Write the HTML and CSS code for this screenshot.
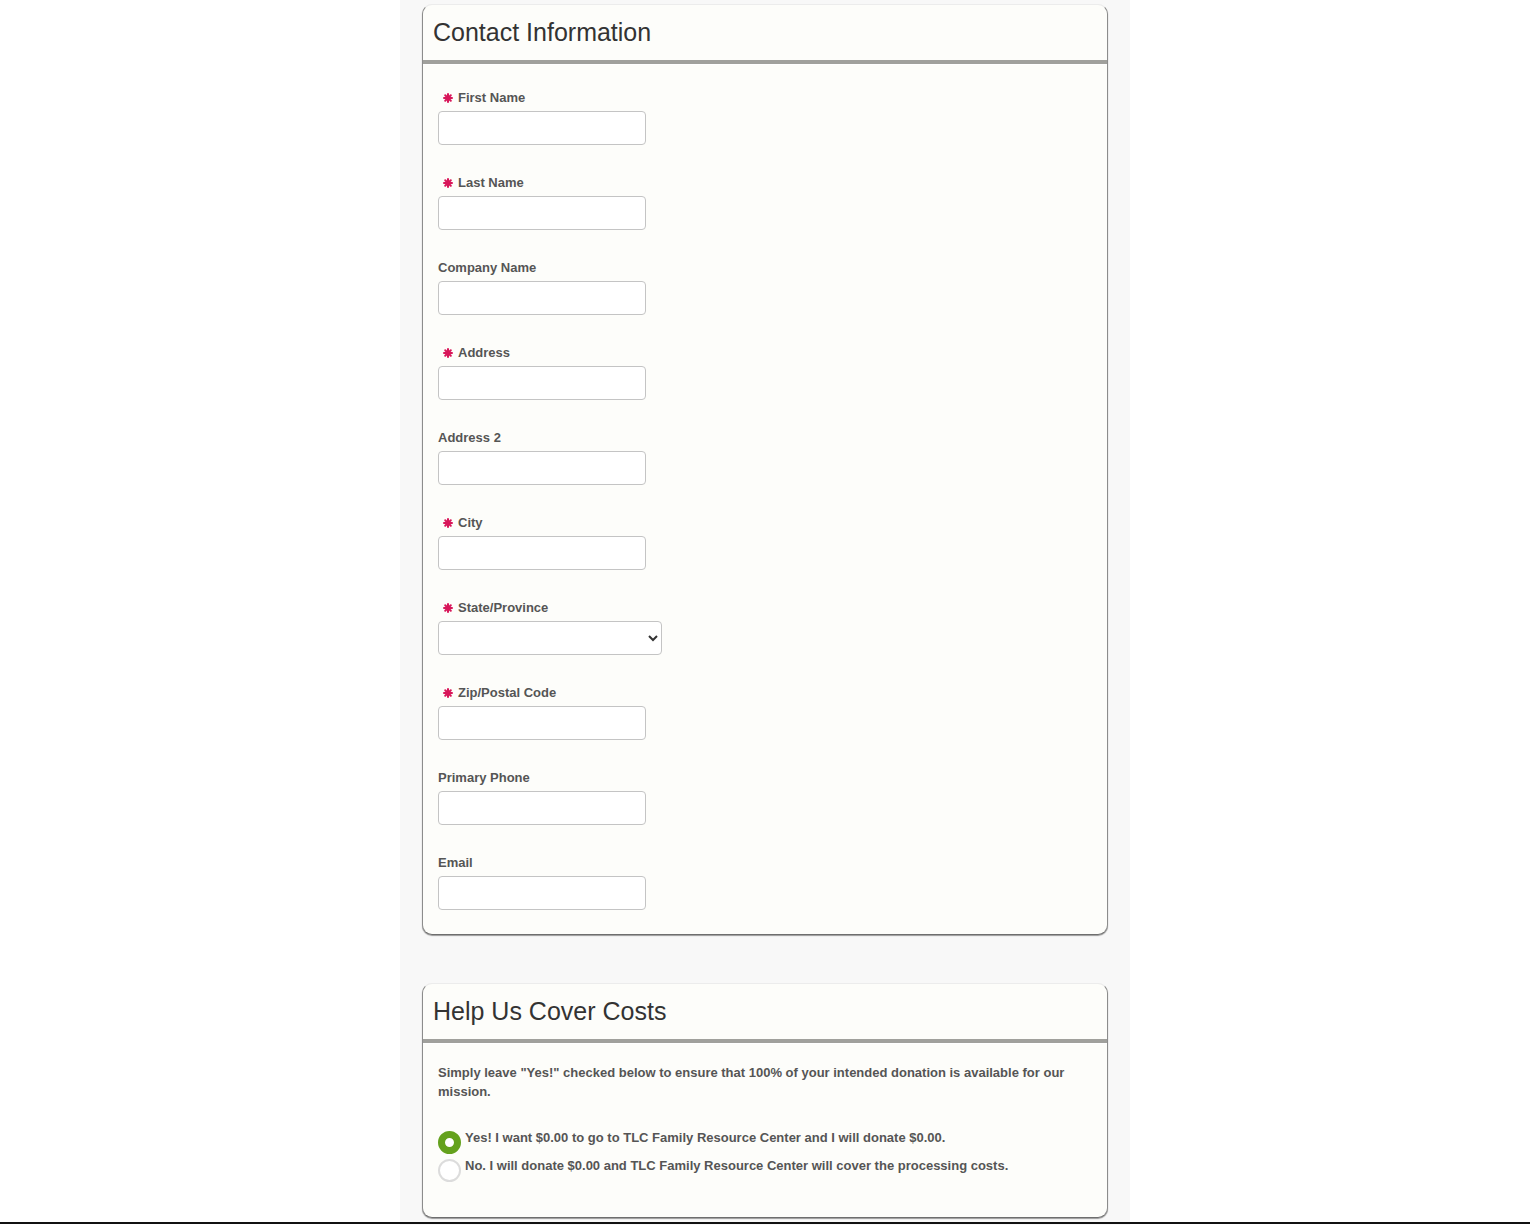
FILE: index.html
```html
<!DOCTYPE html>
<html lang="en">
<head>
<meta charset="utf-8">
<title>Contact Information</title>
<link rel="stylesheet" href="styles.css">
</head>
<body>
<div class="column">
  <section class="card">
    <h2 class="card-title">Contact Information</h2>
    <div class="card-body">
      <div class="field">
        <label class="label"><svg class="req" viewBox="0 0 10 10"><g stroke="#d8175a" stroke-width="2" stroke-linecap="round"><line x1="5" y1="1" x2="5" y2="9"/><line x1="1" y1="5" x2="9" y2="5"/><line x1="2.2" y1="2.2" x2="7.8" y2="7.8"/><line x1="7.8" y1="2.2" x2="2.2" y2="7.8"/></g></svg>First Name</label>
        <input class="input" type="text">
      </div>
      <div class="field">
        <label class="label"><svg class="req" viewBox="0 0 10 10"><g stroke="#d8175a" stroke-width="2" stroke-linecap="round"><line x1="5" y1="1" x2="5" y2="9"/><line x1="1" y1="5" x2="9" y2="5"/><line x1="2.2" y1="2.2" x2="7.8" y2="7.8"/><line x1="7.8" y1="2.2" x2="2.2" y2="7.8"/></g></svg>Last Name</label>
        <input class="input" type="text">
      </div>
      <div class="field">
        <label class="label">Company Name</label>
        <input class="input" type="text">
      </div>
      <div class="field">
        <label class="label"><svg class="req" viewBox="0 0 10 10"><g stroke="#d8175a" stroke-width="2" stroke-linecap="round"><line x1="5" y1="1" x2="5" y2="9"/><line x1="1" y1="5" x2="9" y2="5"/><line x1="2.2" y1="2.2" x2="7.8" y2="7.8"/><line x1="7.8" y1="2.2" x2="2.2" y2="7.8"/></g></svg>Address</label>
        <input class="input" type="text">
      </div>
      <div class="field">
        <label class="label">Address 2</label>
        <input class="input" type="text">
      </div>
      <div class="field">
        <label class="label"><svg class="req" viewBox="0 0 10 10"><g stroke="#d8175a" stroke-width="2" stroke-linecap="round"><line x1="5" y1="1" x2="5" y2="9"/><line x1="1" y1="5" x2="9" y2="5"/><line x1="2.2" y1="2.2" x2="7.8" y2="7.8"/><line x1="7.8" y1="2.2" x2="2.2" y2="7.8"/></g></svg>City</label>
        <input class="input" type="text">
      </div>
      <div class="field">
        <label class="label"><svg class="req" viewBox="0 0 10 10"><g stroke="#d8175a" stroke-width="2" stroke-linecap="round"><line x1="5" y1="1" x2="5" y2="9"/><line x1="1" y1="5" x2="9" y2="5"/><line x1="2.2" y1="2.2" x2="7.8" y2="7.8"/><line x1="7.8" y1="2.2" x2="2.2" y2="7.8"/></g></svg>State/Province</label>
        <select class="select"><option></option></select>
      </div>
      <div class="field">
        <label class="label"><svg class="req" viewBox="0 0 10 10"><g stroke="#d8175a" stroke-width="2" stroke-linecap="round"><line x1="5" y1="1" x2="5" y2="9"/><line x1="1" y1="5" x2="9" y2="5"/><line x1="2.2" y1="2.2" x2="7.8" y2="7.8"/><line x1="7.8" y1="2.2" x2="2.2" y2="7.8"/></g></svg>Zip/Postal Code</label>
        <input class="input" type="text">
      </div>
      <div class="field">
        <label class="label">Primary Phone</label>
        <input class="input" type="text">
      </div>
      <div class="field">
        <label class="label">Email</label>
        <input class="input" type="text">
      </div>
    </div>
  </section>

  <section class="card">
    <h2 class="card-title">Help Us Cover Costs</h2>
    <div class="card-body costs">
      <p class="note">Simply leave "Yes!" checked below to ensure that 100% of your intended donation is available for our mission.</p>
      <div class="options">
        <div class="option"><span class="radio checked"></span><span class="option-text">Yes! I want $0.00 to go to TLC Family Resource Center and I will donate $0.00.</span></div>
        <div class="option"><span class="radio"></span><span class="option-text">No. I will donate $0.00 and TLC Family Resource Center will cover the processing costs.</span></div>
      </div>
    </div>
  </section>
</div>
<div class="bottom-line"></div>
</body>
</html>
```

FILE: styles.css
```css
html, body {
  margin: 0;
  padding: 0;
  background: #ffffff;
  font-family: "Liberation Sans", Arial, sans-serif;
}

.column {
  width: 730px;
  margin: 0 auto;
  background: #f8f8f8;
  padding: 4px 22px 40px 22px;
  box-sizing: border-box;
  display: flex;
  flex-direction: column;
  gap: 48px;
  min-height: 1225px;
}

.card {
  background: #fdfdfa;
  border-radius: 10px;
  border: 1px solid #8c8c8c;
  border-top-color: #ececec;
  border-bottom-color: #6e6e6e;
  box-shadow: 0 1px 1px #9a9a9a;
}

.card-title {
  margin: 0;
  height: 42px;
  padding: 13px 10px 0;
  font-size: 25px;
  font-weight: normal;
  line-height: 29px;
  color: #333333;
  border-bottom: 4px solid #a0a09c;
}

.card-body {
  padding: 24px 15px 24px;
  border-top: 1px solid #ffffff;
}

.field {
  margin-bottom: 29px;
}

.field:last-child {
  margin-bottom: 0;
}

.label {
  display: flex;
  align-items: center;
  height: 16px;
  margin-bottom: 6px;
  font-size: 13px;
  font-weight: bold;
  color: #555555;
}

.req {
  width: 10px;
  height: 10px;
  margin: 1px 5px 0 5px;
}

.input {
  display: block;
  width: 208px;
  height: 34px;
  box-sizing: border-box;
  border: 1px solid #c4c4c4;
  border-radius: 4px;
  background: #ffffff;
  margin: 0;
  padding: 4px 8px;
  font-family: inherit;
  font-size: 13px;
}

.select {
  display: block;
  width: 224px;
  height: 34px;
  box-sizing: border-box;
  border: 1px solid #c4c4c4;
  border-radius: 4px;
  background: #ffffff;
  margin: 0;
  font-family: inherit;
  font-size: 13px;
  color: #333333;
}

.costs {
  padding-top: 19px;
  padding-bottom: 43px;
}

.note {
  margin: 0 0 29px;
  font-size: 13px;
  font-weight: bold;
  line-height: 19px;
  color: #555555;
}

.options {
  display: flex;
  flex-direction: column;
  gap: 12px;
}

.option {
  display: flex;
  align-items: flex-start;
  gap: 4px;
  height: 16px;
}

.radio {
  width: 23px;
  height: 23px;
  box-sizing: border-box;
  border-radius: 50%;
  border: 2px solid #dcdcdc;
  background: #ffffff;
  flex: none;
  margin-top: 1px;
}

.radio.checked {
  border: 7px solid #64a11d;
}

.option-text {
  font-size: 13px;
  font-weight: bold;
  line-height: 16px;
  color: #555555;
}

.bottom-line {
  position: fixed;
  left: 0;
  right: 0;
  bottom: 1px;
  height: 2px;
  background: #111111;
}
```
